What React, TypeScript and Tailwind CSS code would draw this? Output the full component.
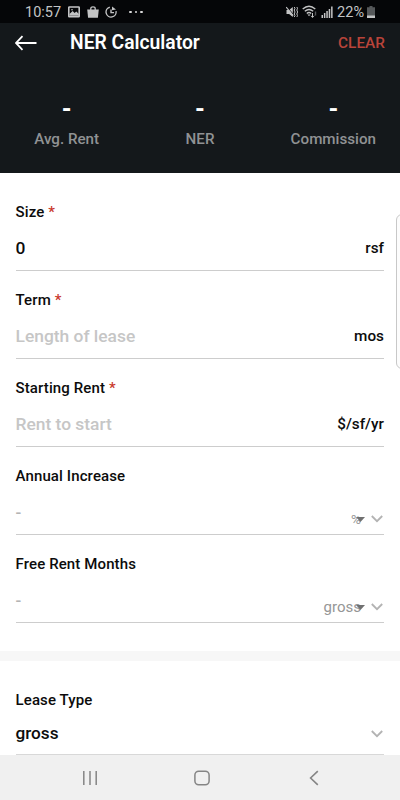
import { useState } from 'react'
import clsx from 'clsx'

const stats = ['Avg. Rent', 'NER', 'Commission']

const StatusBar = () => (
  <div className="flex h-[23px] items-center justify-between bg-[#050608] px-[25px] text-[#c3c4c5]">
    <div className="flex items-center">
      <span className="w-[43px] pt-0.5 text-[14.5px] leading-5">10:57</span>
      <svg className="h-3 w-3" viewBox="0 0 12 12" fill="none">
        <rect x="0.8" y="1" width="10.4" height="9.8" rx="0.6" stroke="currentColor" strokeWidth="1.6" />
        <path d="M1.5 9.8V8L4.6 5l2 2 1.7-1.5 2.6 2.6v1.7z" fill="currentColor" />
        <circle cx="4" cy="3.8" r="0.8" fill="currentColor" />
      </svg>
      <svg className="ml-[7px] h-3 w-3" viewBox="0 0 12 12" fill="none">
        <path d="M3.8 4V2.4Q3.8 0.8 6 0.8t2.2 1.6V4" stroke="currentColor" strokeWidth="1.3" />
        <path d="M0.2 3.4h11.6L10.9 11.8H1.1z" fill="currentColor" />
      </svg>
      <svg className="ml-1.5 h-3 w-3" viewBox="0 0 12 12" fill="none" stroke="currentColor" strokeWidth="1.4">
        <path d="M4.8 1.2a5 5 0 1 0 6.2 4" />
        <path d="M6 3.4v3.2h3" />
        <path d="M7 0.4v3.8l4-0.8z" fill="currentColor" stroke="none" />
      </svg>
      <span className="ml-3 flex gap-[3px] text-[#dadada]">
        <i className="h-0.5 w-[2.5px] rounded-full bg-current" />
        <i className="h-0.5 w-[2.5px] rounded-full bg-current" />
        <i className="h-0.5 w-[2.5px] rounded-full bg-current" />
      </span>
    </div>

    <div className="flex items-center">
      <svg className="h-3 w-3" viewBox="0 0 12 12" fill="none" stroke="currentColor">
        <path d="M0.5 4h2.6L6.8 1v10L3.1 8H0.5z" fill="currentColor" stroke="none" />
        <path d="m8.2 1 0.8 1.3L8.2 4 9 6l-0.8 2 0.8 1.6-0.8 1.4M10.8 1l0.8 1.3-0.8 1.7 0.8 2-0.8 2 0.8 1.6-0.8 1.4" />
        <path d="m0.4 0.2 6.8 8" stroke="#050608" />
        <path d="m0.2 1.2 7 8.4" strokeWidth="1.1" />
      </svg>
      <svg className="ml-1 h-[13px] w-[15px]" viewBox="0 0 15 13" fill="none" stroke="currentColor" strokeWidth="1.4">
        <path d="M0.7 4Q7 -1.5 13.3 4M2.8 6.3Q7 2.7 11.2 6.3M4.8 8.5Q7 6.5 9.2 8.5" />
        <path d="m5.5 9.4 1.5 1.8 1.5-1.8z" fill="currentColor" stroke="none" />
        <path d="M10.5 8v4.5M9 10.8l1.5 1.5 1.5-1.5" strokeWidth="1" />
        <path d="M13.5 6.5v4" stroke="#55585a" />
      </svg>
      <svg className="ml-1 h-3 w-3" viewBox="0 0 12 12" fill="currentColor">
        <path d="M0.5 9H2v3H.5zM2.9 7h1.5v5H2.9zM5.3 5h1.5v7H5.3zM7.7 3h1.5v9H7.7zM10.1 0.5h1.5V12h-1.5z" />
      </svg>
      <span className="ml-1 pt-0.5 text-[14.5px] leading-5">22%</span>
      <svg className="ml-[3px] h-3 w-2" viewBox="0 0 8 12">
        <path d="M2.5 0h3v1.2H8V12H0V1.2h2.5z" fill="#55585a" />
        <path d="M0 9.5h8V12H0z" fill="currentColor" />
      </svg>
    </div>
  </div>
)

const Chevron = () => (
  <svg className="mr-px h-2 w-3" viewBox="0 0 12 8" fill="none" stroke="#b3b3b3" strokeWidth="1.8">
    <path d="m0.8 1 5.2 5.2L11.2 1" />
  </svg>
)

type FieldProps = {
  label: string
  required?: boolean
  placeholder?: string
  initial?: string
  unit: string
}

const Label = ({ label, required }: { label: string; required?: boolean }) => (
  <div className="text-[15px] font-medium leading-5 tracking-[0.12px] text-[#0c0c0c]">
    {label} {required && <span className="text-[#c9392c]">*</span>}
  </div>
)

const Field = ({ label, required, placeholder, initial = '', unit }: FieldProps) => {
  const [value, setValue] = useState(initial)

  return (
    <div className="h-[88px]">
      <Label label={label} required={required} />
      <div className="flex h-[49px] items-center border-b border-[#cdcdcd] pt-1">
        <input
          value={value}
          onChange={(e) => setValue(e.target.value)}
          placeholder={placeholder}
          className="min-w-0 flex-1 text-[17.4px] font-medium leading-5 text-[#0c0c0c] outline-none placeholder:text-[#c6c6c6]"
        />
        <span className="text-[15.3px] font-medium text-[#0c0c0c]">{unit}</span>
      </div>
    </div>
  )
}

const SelectField = ({ label, unit, small }: { label: string; unit: string; small?: boolean }) => (
  <div className="h-[88px]">
    <Label label={label} />
    <div className="flex h-[49px] items-end justify-between border-b border-[#cdcdcd] pb-[5px]">
      <span className="mb-[7px] text-[17px] font-medium leading-5 text-[#b4b4b4]">-</span>
      <div className="flex items-center text-[#969696]">
        <span className={clsx('leading-5', small ? 'text-[13.5px]' : 'text-[15px]')}>{unit}</span>
        <svg className="-ml-[5px] h-[5px] w-[9px]" viewBox="0 0 9 5">
          <path d="M0 0h9L4.5 5z" fill="#707070" />
        </svg>
        <span className="ml-1.5 flex">
          <Chevron />
        </span>
      </div>
    </div>
  </div>
)

const NavBar = () => (
  <div className="flex h-[45px] items-center bg-[#f0f0f0] text-[#858585]">
    <svg className="ml-[82px] h-4 w-4" viewBox="0 0 16 16" stroke="currentColor" strokeWidth="1.5">
      <path d="M1.8 1v14M8 1v14M14.2 1v14" />
    </svg>
    <svg className="ml-24 h-4 w-4" viewBox="0 0 16 16" fill="none" stroke="currentColor" strokeWidth="1.5">
      <rect x="0.9" y="1.2" width="14.2" height="13.6" rx="3.8" />
    </svg>
    <svg className="ml-[99px] h-4 w-4" viewBox="0 0 16 16" fill="none" stroke="currentColor" strokeWidth="1.6">
      <path d="M8.8 1.2 1.6 8l7.2 6.8" />
    </svg>
  </div>
)

export default function App() {
  return (
    <div className="relative flex h-[800px] w-[400px] flex-col overflow-hidden bg-white font-['Roboto',sans-serif]">
      <header className="h-[173px] bg-[#14181b]">
        <StatusBar />
        <div className="flex h-10 items-center px-[15px]">
          <svg className="h-4 w-[22px]" viewBox="0 0 22 16" fill="none" stroke="#fff" strokeWidth="1.8">
            <path d="M21.5 8H1M7.5 1.2 0.9 8l6.6 6.8" />
          </svg>
          <h1 className="ml-[33px] flex-1 text-[19.3px] font-semibold text-white">NER Calculator</h1>
          <button className="pt-0.5 text-[15.4px] font-medium text-[#b9443a]">CLEAR</button>
        </div>

        {/* Results */}
        <div className="grid grid-cols-3 pt-[33px] text-center">
          {stats.map((stat) => (
            <div key={stat}>
              <div className="text-[25px] font-bold leading-7 text-white">-</div>
              <div className="mt-[5px] text-[15.2px] font-medium leading-5 text-[#909294]">{stat}</div>
            </div>
          ))}
        </div>
      </header>

      <main className="flex-1">
        <section className="h-[478px] pl-[15.5px] pr-4 pt-[29px]">
          <Field label="Size" required initial="0" unit="rsf" />
          <Field label="Term" required placeholder="Length of lease" unit="mos" />
          <Field label="Starting Rent" required placeholder="Rent to start" unit="$/sf/yr" />
          <SelectField label="Annual Increase" unit="%" small />
          <SelectField label="Free Rent Months" unit="gross" />
        </section>

        <div className="h-2.5 bg-[#f7f7f7]" />

        <section className="pl-[15.5px] pr-4 pt-[29px]">
          <Label label="Lease Type" />
          <div className="flex h-[45px] items-center justify-between border-b border-[#d8d8d8] pt-1">
            <span className="text-[17.2px] font-medium text-[#0c0c0c]">gross</span>
            <Chevron />
          </div>
        </section>
      </main>

      <NavBar />

      {/* Edge panel handle */}
      <div className="absolute -right-2 top-[214px] h-[155px] w-3 rounded-md border border-[#c8c8c8] bg-[#fcfcfc]" />
    </div>
  )
}
